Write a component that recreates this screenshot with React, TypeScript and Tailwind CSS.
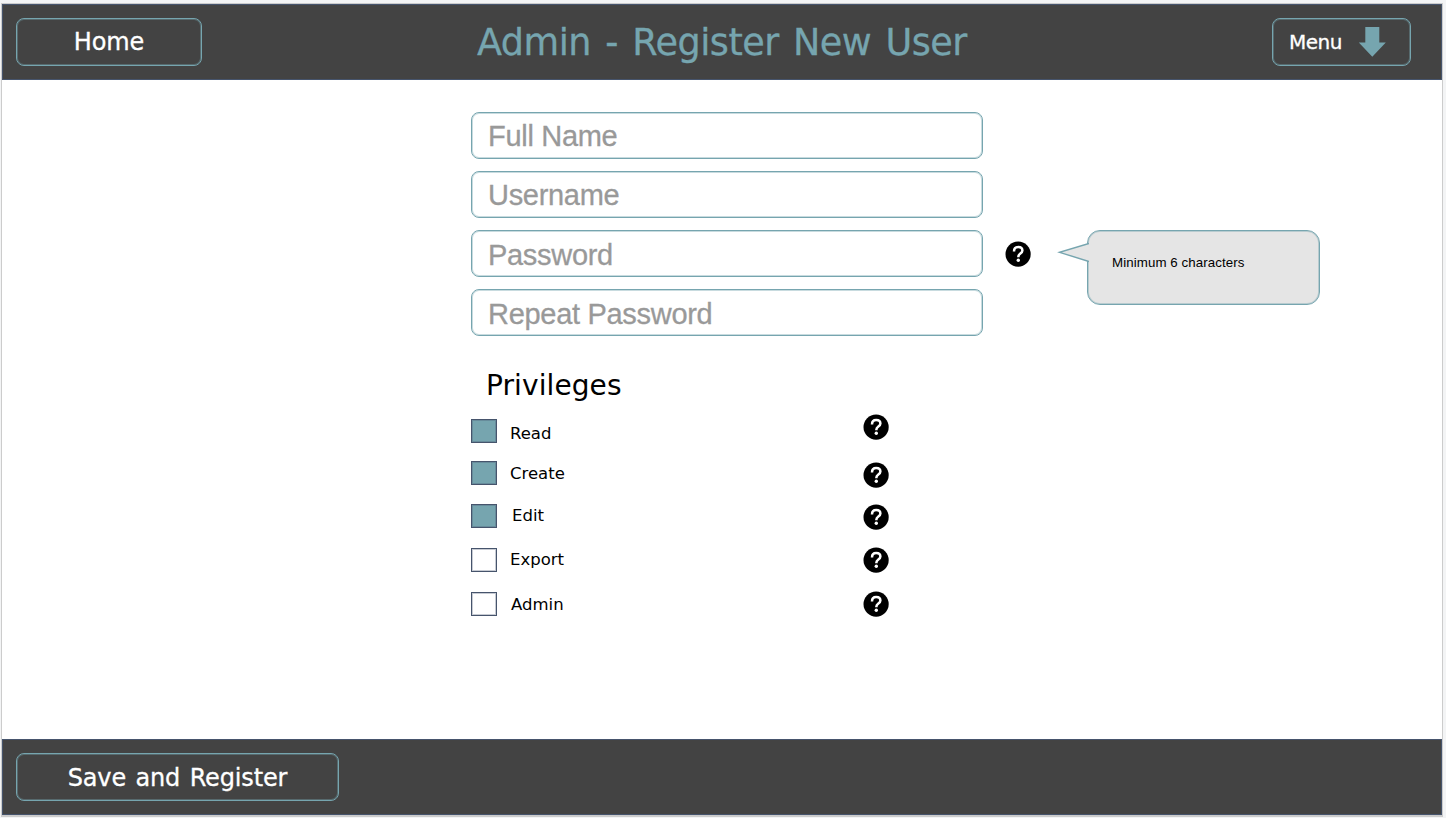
import React from "react";

const outline =
  "rounded-lg border border-[#76a5af] shadow-[inset_0_0_0_1px_rgba(118,165,175,0.4)]";
const verdana = "font-['DejaVu_Sans',sans-serif]";

function HelpIcon({ className = "" }: { className?: string }) {
  return (
    <svg viewBox="0 0 26 26" className={`h-[26px] w-[26px] shrink-0 ${className}`} aria-label="Help">
      <circle cx="13.1" cy="13.1" r="12.6" fill="#000" />
      <path
        d="M9 10.4C9 7.4 10.7 6.1 13.2 6.1c2.4 0 4.2 1.3 4.2 3.5 0 3-4 3-4 5.9v.7"
        fill="none"
        stroke="#fff"
        strokeWidth="2.5"
      />
      <circle cx="13.3" cy="19.3" r="1.7" fill="#fff" />
    </svg>
  );
}

const fields = [
  { label: "Full Name", row: "h-[59px]", text: "mt-px" },
  { label: "Username", row: "h-[59px]", text: "mt-px" },
  { label: "Password", row: "h-[59px]", text: "mt-[3px]", hint: true },
  { label: "Repeat Password", row: "h-[48px]", text: "mt-[3px]" },
];

const privileges = [
  { label: "Read", on: true, row: "h-[42px]", text: "ml-[13px] mt-[8px]", help: "mt-0" },
  { label: "Create", on: true, row: "h-[43px]", text: "ml-[13px] mt-[6px]", help: "mt-[6px]" },
  { label: "Edit", on: true, row: "h-[44px]", text: "ml-[15px] mt-[5px]", help: "mt-[5px]" },
  { label: "Export", on: false, row: "h-[44px]", text: "ml-[13px] mt-[5px]", help: "mt-[4px]" },
  { label: "Admin", on: false, row: "h-[43px]", text: "ml-[14px] mt-[6px]", help: "mt-[4px]" },
];

export default function App() {
  return (
    <div className="h-[818px] w-[1446px] overflow-hidden bg-[#f3f4f5] pl-px pt-[3px]">
      <div className="flex h-[814px] w-[1442px] flex-col border border-[#cccccc] border-b-2 bg-white">
        <header className="flex h-[76px] shrink-0 items-start border border-[#46546c] bg-[#434343] pl-[13px] pt-[13px]">
          <button className={`flex h-[48px] w-[186px] items-center justify-center text-white ${outline} ${verdana}`}>
            <span className="text-[24px] leading-[30px] tracking-[-0.1px] [-webkit-text-stroke:0.3px]">Home</span>
          </button>
          <h1 className={`ml-[275px] mt-[3px] w-[795px] whitespace-nowrap text-[36.6px] leading-[44px] tracking-[-0.52px] text-[#76a5af] [word-spacing:3.2px] [-webkit-text-stroke:0.3px] ${verdana}`}>
            Admin - Register New User
          </h1>
          <button className={`flex h-[48px] w-[139px] items-center pl-[16px] text-white ${outline} ${verdana}`}>
            <span className="w-[69px] text-left text-[20px] leading-[26px] tracking-[-0.5px] [-webkit-text-stroke:0.3px]">
              Menu
            </span>
            <svg viewBox="0 0 28 30" className="h-[30px] w-[28px]">
              <path d="M7.3 0h14v15.5h6.5L14.3 29.7.8 15.5h6.5z" fill="#76a5af" />
            </svg>
          </button>
        </header>

        <main className="flex grow items-start pl-[469px] pt-[32px]">
          <div className="w-[564px]">
            {fields.map((f) => (
              <div key={f.label} className={`flex items-start ${f.row}`}>
                <div className={`flex h-[47px] w-[512px] items-center bg-white pl-[16px] ${outline}`}>
                  <span className={`font-['Liberation_Sans',sans-serif] text-[29px] leading-[34px] tracking-[-0.3px] text-[#999999] [-webkit-text-stroke:0.3px] ${f.text}`}>
                    {f.label}
                  </span>
                </div>
                {f.hint && <HelpIcon className="ml-[22px] mt-[11px]" />}
              </div>
            ))}
            <h2 className={`ml-[15px] mt-[32px] h-[45px] text-[28px] leading-[34px] tracking-[0.1px] text-black ${verdana}`}>
              Privileges
            </h2>
            {privileges.map((p) => (
              <div key={p.label} className={`flex items-start ${p.row}`}>
                <div
                  className={`mt-[5px] h-[24px] w-[26px] shrink-0 border border-[#46546c] shadow-[inset_0_0_0_1px_rgba(70,84,108,0.3)] ${p.on ? "bg-[#76a5af]" : "bg-white"}`}
                />
                <div className={`flex w-[353px] items-start ${verdana}`}>
                  <span className={`text-[16.5px] leading-[24px] text-black ${p.text}`}>{p.label}</span>
                </div>
                <HelpIcon className={`ml-[13px] ${p.help}`} />
              </div>
            ))}
          </div>
          <div className="mt-[118px] flex items-start">
            <div className="relative ml-[52px] h-[75px] w-[233px] rounded-[13px] border border-[#76a5af] bg-[#e5e5e5] pl-[24px] pt-[24px] shadow-[inset_0_0_0_1px_rgba(118,165,175,0.4)]">
              <svg viewBox="0 0 32 24" className="absolute -left-[31px] top-[9px] h-[24px] w-[32px]">
                <path d="M32 3.5 2.5 12.3 32 21.5" fill="#e5e5e5" stroke="#76a5af" strokeWidth="1.4" />
              </svg>
              <span className="block font-['Liberation_Sans',sans-serif] text-[13.3px] leading-[16px] tracking-[0.09px] text-black">
                Minimum 6 characters
              </span>
            </div>
          </div>
        </main>

        <footer className="flex h-[76px] shrink-0 items-start border border-[#46546c] bg-[#434343] pl-[13px] pt-[13px]">
          <button className={`flex h-[48px] w-[323px] items-center justify-center text-white ${outline} ${verdana}`}>
            <span className="mt-[2px] text-[24px] leading-[30px] tracking-[-0.15px] [word-spacing:2px] [-webkit-text-stroke:0.3px]">
              Save and Register
            </span>
          </button>
        </footer>
      </div>
    </div>
  );
}
